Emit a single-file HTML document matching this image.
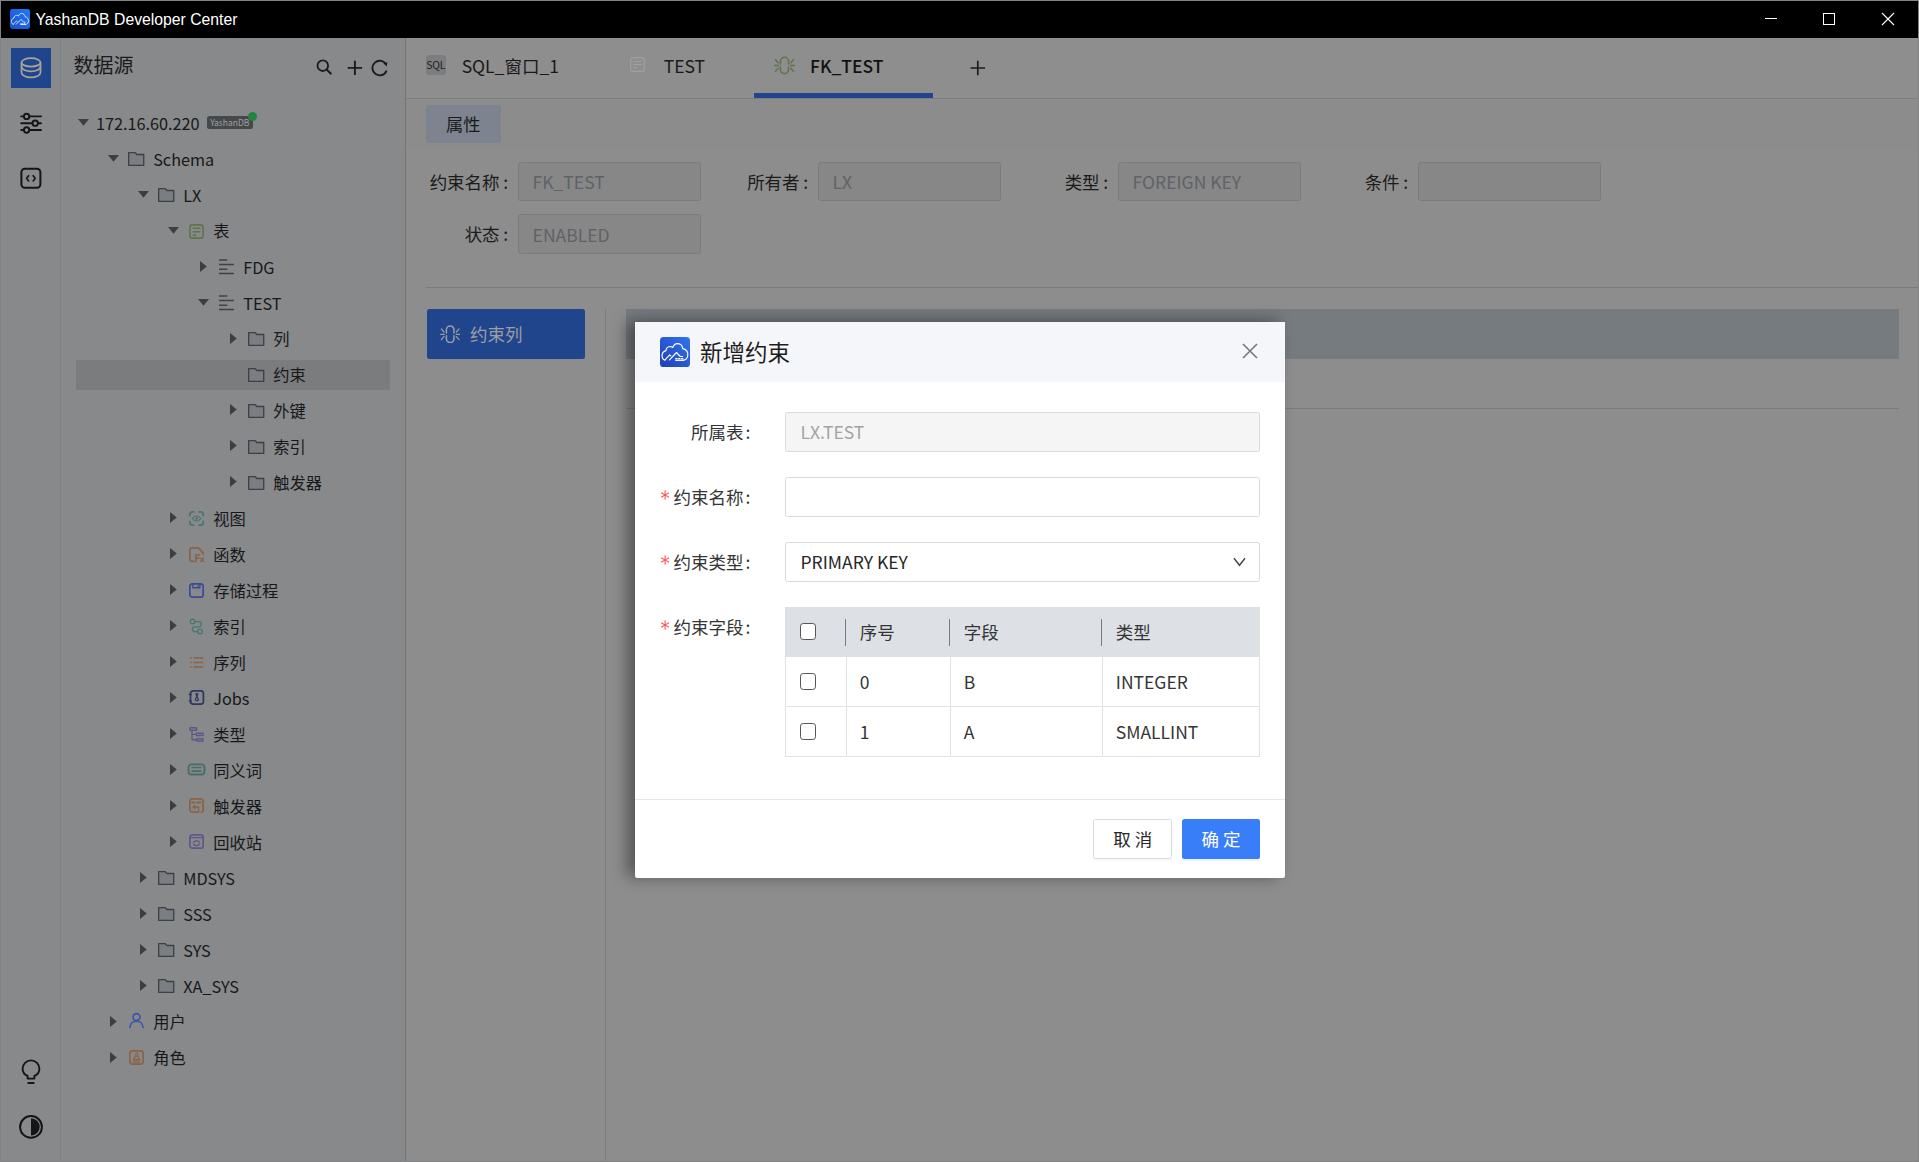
<!DOCTYPE html>
<html lang="zh-CN">
<head>
<meta charset="utf-8">
<title>YashanDB Developer Center</title>
<style>
*{box-sizing:border-box;margin:0;padding:0}
html,body{width:1919px;height:1162px;overflow:hidden;background:#828384}
body{font-family:"Noto Sans CJK SC","Liberation Sans",sans-serif;color:#17181a;position:relative;font-size:16.25px}
.abs{position:absolute}
svg{display:block}
#titlebar{position:absolute;left:1px;top:1px;width:1917px;height:37px;background:#000;color:#fff;font-family:"Liberation Sans","Noto Sans CJK SC",sans-serif;font-size:15.75px}
#titlebar svg{position:absolute}
#titlebar .tt{position:absolute;left:34.5px;top:0;line-height:38px;white-space:nowrap}
#iconbar{position:absolute;left:1px;top:38px;width:59px;height:1123px;background:#88898b}
#iconbar-b{position:absolute;left:60px;top:38px;width:1px;height:1123px;background:#7e8285}
#side{position:absolute;left:61px;top:38px;width:344px;height:1123px;background:#88898b}
#side-b{position:absolute;left:405px;top:38px;width:1px;height:1123px;background:#737476}
#main{position:absolute;left:406px;top:38px;width:1512px;height:1123px;background:#8d8d8d;overflow:hidden}
.row{position:absolute;left:0;width:344px;height:30px;line-height:30px;white-space:nowrap;font-size:16.25px;color:#17181a}
.row .tx{position:absolute;top:1px;line-height:30px}
.row svg{position:absolute}
.lbl{position:absolute;white-space:nowrap;text-align:right;font-size:17.5px;line-height:40.5px;color:#1b1b1c;width:120px}
.lbl b{font-weight:normal;margin-left:3.5px}
.inp{position:absolute;height:38.5px;width:183px;background:#878787;border:1px solid #787c81;border-radius:2.5px;font-size:17.5px;line-height:38.8px;padding-left:13.6px;color:#5f6266;white-space:nowrap}
.tab{position:absolute;top:0;height:60px;line-height:55px;font-size:17.5px;color:#19191a;white-space:nowrap}
/* dialog */
#dlg{position:absolute;left:635px;top:322px;width:650px;height:556px;background:#fff;border-radius:0 0 2.5px 2.5px;box-shadow:-8px -1px 16px 0 rgba(0,0,0,.4);color:#222;font-size:17.5px}
#dlg .hd{position:absolute;left:0;top:0;width:650px;height:60px;background:#f5f6fa}
#dlg .hd .t{position:absolute;left:65px;top:0;line-height:59px;font-size:22.5px;color:#1d1d1d;white-space:nowrap}
#dlg svg{position:absolute}
#dlg .fl{position:absolute;left:0;width:115.4px;text-align:right;line-height:40px;font-size:17.5px;color:#353535;white-space:nowrap}
#dlg .fl i{font-style:normal;color:#ff4d4f;font-family:"WenQuanYi Zen Hei","DejaVu Sans",sans-serif;font-size:21px;line-height:20px;margin-right:2.3px;position:relative;top:1.2px}
#dlg .fl b{font-weight:normal;margin-left:2px}
#dlg .fi{position:absolute;left:150px;width:475px;height:40px;border:1px solid #d6dbe3;border-radius:2.5px;background:#fff;line-height:38px;padding-left:14.5px;font-size:17.5px;color:#262626;white-space:nowrap}
#dlg .fi.dis{background:#f5f5f5;color:#a3a3a3}
#dlg table{position:absolute;left:150px;top:285px;width:475px;border-collapse:separate;border-spacing:0;table-layout:fixed;font-size:17.5px;color:#353535}
#dlg th{height:49.7px;background:#dde1e6;font-weight:normal;text-align:left;padding:0 0 0 12.8px;position:relative}
#dlg td{height:50px;border-right:1px solid #dfe3e9;border-bottom:1px solid #dfe3e9;padding:0 0 0 12.8px}
#dlg td:first-child{border-left:1px solid #dfe3e9;padding-left:13px}
#dlg th:first-child{padding-left:14px}
#dlg th .dv{position:absolute;left:-2px;top:11.5px;width:1px;height:27px;background:#777b80}
#dlg .cb{display:block;width:16.8px;height:16.8px;border:1.3px solid #555;border-radius:3.2px;background:#fff;margin-left:0.5px}
#dlg .ft{position:absolute;left:0;top:477px;width:650px;height:1px;background:#e4e8ee}
#dlg .btn{position:absolute;top:497px;height:39.8px;border-radius:2.5px;font-size:17.5px;line-height:37.5px;text-align:center;white-space:nowrap}
</style>
</head>
<body>
<div id="titlebar"><svg style="left:9.00px;top:8.00px" width="20" height="20" viewBox="0 0 30 30" ><defs><linearGradient id="lg1" x1="1" y1="0" x2="0" y2="1"><stop offset="0" stop-color="#1f7af8"/><stop offset="1" stop-color="#1a50cc"/></linearGradient></defs><rect x="0" y="0" width="30" height="30" rx="3.600" fill="url(#lg1)"/><g fill="none" stroke="#fff" stroke-linecap="round" stroke-linejoin="round"><path d="M4.800 23C3 22.500 2.100 20.500 2.100 18.400C2.100 16 3.800 14.300 6 13.600C5.800 11.500 7.600 9.600 10 9.500C11 9.500 12 9.900 12.700 10.500C13.600 8.200 15.200 6.600 17.200 6.600C20 6.600 22.400 8.600 22.700 11.600C25.600 12.200 27.800 14.600 27.800 17.500C27.800 20.500 26 22.600 23.800 23.100" stroke-width="1.150"/><path d="M4.800 23.100L9.700 17.900L10.800 18.900M9.500 22.800L16.500 15.500L20.200 19.500H22.700" stroke-width="1.150"/><path d="M15.300 21.600H17.500M18.200 21.600H20.100M20.700 21.600H23.200" stroke-width="1.100" stroke-linecap="butt"/><path d="M15.300 23.300H24" stroke-width="1.300" stroke-linecap="butt"/></g></svg><span class="tt">YashanDB Developer Center</span><svg style="left:1760px;top:8px" width="20" height="20" viewBox="1761 9 20 20"><path d="M1765 18.500H1777" stroke="#fff" stroke-width="1"/></svg><svg style="left:1818px;top:8px" width="20" height="20" viewBox="1819 9 20 20"><rect x="1823.500" y="13.500" width="11" height="11" fill="none" stroke="#fff" stroke-width="1"/></svg><svg style="left:1877px;top:8px" width="20" height="20" viewBox="1878 9 20 20"><path d="M1882 13L1894 25M1894 13L1882 25" stroke="#fff" stroke-width="1.100"/></svg></div>
<div id="iconbar"><div class="abs" style="left:10px;top:10px;width:40px;height:40px;background:#1f458c"></div><svg class="abs" style="left:0;top:0" width="59" height="160" viewBox="1 38 59 160"><g fill="none" stroke="#aaa498" stroke-width="1.700" stroke-linecap="round"><ellipse cx="31" cy="62.400" rx="9.500" ry="4.200"/><path d="M21.500 62.400V66.800A9.500 4.600 0 0 0 40.500 66.800V62.400"/><path d="M21.500 66.800V72.600A9.500 4.800 0 0 0 40.500 72.600V66.800"/></g><g fill="none" stroke="#141517" stroke-width="1.900" stroke-linecap="round"><path d="M21.200 116.400H23.600M29.600 116.400H41M21.200 123.200H32.200M38.200 123.200H41M21.200 130H23.600M29.600 130H41"/><circle cx="26.600" cy="116.400" r="2.700"/><circle cx="35.200" cy="123.200" r="2.700"/><circle cx="26.600" cy="130" r="2.700"/></g><g fill="none" stroke="#141517" stroke-width="2" stroke-linecap="round" stroke-linejoin="round"><rect x="21.400" y="168.800" width="19" height="19" rx="3.500"/><path d="M28.600 175.700L26.600 178.300L28.600 180.900M33.200 175.700L35.200 178.300L33.200 180.900" stroke-width="1.600"/></g></svg><svg class="abs" style="left:0;top:1010px" width="59" height="113" viewBox="1 1048 59 113"><g fill="none" stroke="#141517" stroke-width="1.900" stroke-linecap="round" stroke-linejoin="round"><path d="M27.600 1078.600H34.400V1076C37.500 1074.700 39.400 1072 39.400 1068.800A8.400 8.400 0 0 0 22.600 1068.800C22.600 1072 24.500 1074.700 27.600 1076Z"/><path d="M28.300 1083H33.700"/><circle cx="31" cy="1126.900" r="10.900" stroke-width="2"/></g><path d="M31 1118.200A8.700 8.700 0 0 1 31 1135.600Z" fill="#141517"/></svg></div><div id="iconbar-b"></div>
<div id="side">
<div class="abs" style="left:12.5px;top:12.4px;font-size:20px;line-height:30px;color:#1a1b1d">数据源</div>
<svg class="abs" style="left:239px;top:2px" width="100" height="60" viewBox="300 40 100 60"><g fill="none" stroke="#1b1c1e" stroke-width="1.900" stroke-linecap="butt"><circle cx="322.800" cy="65.700" r="5.300"/><path d="M326.600 69.500L331.400 74.200"/><path d="M347.700 67.900H362.100M354.900 60.700V75.100"/><path d="M386.200 64.600A7.300 7.300 0 1 0 386.600 70.600"/></g><path d="M383.300 63.300L387.300 62.300L386.800 66.600Z" fill="#1b1c1e"/></svg>
<div class="row" style="top:70.00px"><svg style="left:17.10px;top:10.9px" width="11" height="7" viewBox="0 0 11 7"><path d="M0 0H11L5.5 6.8Z" fill="#3b3e43"/></svg><span class="tx" style="left:34.90px;top:0.3px">172.16.60.220</span><span class="abs" style="left:146px;top:7.600px;width:45.500px;height:13.600px;background:#46484c;border-radius:2.500px;color:#9fa0a2;font-size:8.500px;line-height:13.400px;text-align:center">YashanDB</span><span class="abs" style="left:187px;top:3.600px;width:9px;height:9px;border-radius:50%;background:#23843f"></span></div>
<div class="row" style="top:105.95px"><svg style="left:47.10px;top:10.9px" width="11" height="7" viewBox="0 0 11 7"><path d="M0 0H11L5.5 6.8Z" fill="#3b3e43"/></svg><svg style="left:66.80px;top:8.40px;overflow:visible" width="16.4" height="14" viewBox="0 0 16.4 14"><path d="M0.650 0.650H7.200L8.900 2.500H15.750V13.350H0.650Z" fill="#7a7e82" stroke="#3c3f44" stroke-width="1.300" stroke-linejoin="round"/></svg><span class="tx" style="left:92.20px;top:0.3px">Schema</span></div>
<div class="row" style="top:141.90px"><svg style="left:77.10px;top:10.9px" width="11" height="7" viewBox="0 0 11 7"><path d="M0 0H11L5.5 6.8Z" fill="#3b3e43"/></svg><svg style="left:96.80px;top:8.40px;overflow:visible" width="16.4" height="14" viewBox="0 0 16.4 14"><path d="M0.650 0.650H7.200L8.900 2.500H15.750V13.350H0.650Z" fill="#7a7e82" stroke="#3c3f44" stroke-width="1.300" stroke-linejoin="round"/></svg><span class="tx" style="left:122.20px;top:0.3px">LX</span></div>
<div class="row" style="top:177.85px"><svg style="left:107.10px;top:10.9px" width="11" height="7" viewBox="0 0 11 7"><path d="M0 0H11L5.5 6.8Z" fill="#3b3e43"/></svg><svg style="left:127.50px;top:7.85px;overflow:visible" width="15" height="15" viewBox="0 0 15 15"><g stroke-linecap="round" stroke-linejoin="round" fill="none" stroke="#5f7448"><rect x="0.850" y="0.850" width="13.300" height="13.300" rx="2.600" stroke-width="1.600"/><path d="M4.200 4.150H10.800M4.200 7.650H10.800M4.200 11.150H6.700" stroke-width="1.500"/></g></svg><span class="tx" style="left:152.20px;top:-0.4px">表</span></div>
<div class="row" style="top:213.80px"><svg style="left:139.30px;top:8.9px" width="7" height="11" viewBox="0 0 7 11"><path d="M0 0V11L6.8 5.5Z" fill="#3b3e43"/></svg><svg style="left:157.50px;top:7.50px;overflow:visible" width="15" height="15" viewBox="0 0 15 15"><path d="M0 1H8.300M0 5.600H14.900M0 10.200H8.300M0 14.600H14.900" stroke="#3f4246" stroke-width="1.500" fill="none"/></svg><span class="tx" style="left:182.20px;top:0.3px">FDG</span></div>
<div class="row" style="top:249.75px"><svg style="left:137.10px;top:10.9px" width="11" height="7" viewBox="0 0 11 7"><path d="M0 0H11L5.5 6.8Z" fill="#3b3e43"/></svg><svg style="left:157.50px;top:7.50px;overflow:visible" width="15" height="15" viewBox="0 0 15 15"><path d="M0 1H8.300M0 5.600H14.900M0 10.200H8.300M0 14.600H14.900" stroke="#3f4246" stroke-width="1.500" fill="none"/></svg><span class="tx" style="left:182.20px;top:0.3px">TEST</span></div>
<div class="row" style="top:285.70px"><svg style="left:169.30px;top:8.9px" width="7" height="11" viewBox="0 0 7 11"><path d="M0 0V11L6.8 5.5Z" fill="#3b3e43"/></svg><svg style="left:186.80px;top:8.40px;overflow:visible" width="16.4" height="14" viewBox="0 0 16.4 14"><path d="M0.650 0.650H7.200L8.900 2.500H15.750V13.350H0.650Z" fill="#7a7e82" stroke="#3c3f44" stroke-width="1.300" stroke-linejoin="round"/></svg><span class="tx" style="left:212.20px;top:-0.4px">列</span></div>
<div class="abs" style="left:15px;top:322.15px;width:314px;height:29.7px;background:#7b7c7e"></div><div class="row" style="top:321.65px"><svg style="left:186.80px;top:8.40px;overflow:visible" width="16.4" height="14" viewBox="0 0 16.4 14"><path d="M0.650 0.650H7.200L8.900 2.500H15.750V13.350H0.650Z" fill="#7a7e82" stroke="#3c3f44" stroke-width="1.300" stroke-linejoin="round"/></svg><span class="tx" style="left:212.20px;top:-0.4px">约束</span></div>
<div class="row" style="top:357.60px"><svg style="left:169.30px;top:8.9px" width="7" height="11" viewBox="0 0 7 11"><path d="M0 0V11L6.8 5.5Z" fill="#3b3e43"/></svg><svg style="left:186.80px;top:8.40px;overflow:visible" width="16.4" height="14" viewBox="0 0 16.4 14"><path d="M0.650 0.650H7.200L8.900 2.500H15.750V13.350H0.650Z" fill="#7a7e82" stroke="#3c3f44" stroke-width="1.300" stroke-linejoin="round"/></svg><span class="tx" style="left:212.20px;top:-0.4px">外键</span></div>
<div class="row" style="top:393.55px"><svg style="left:169.30px;top:8.9px" width="7" height="11" viewBox="0 0 7 11"><path d="M0 0V11L6.8 5.5Z" fill="#3b3e43"/></svg><svg style="left:186.80px;top:8.40px;overflow:visible" width="16.4" height="14" viewBox="0 0 16.4 14"><path d="M0.650 0.650H7.200L8.900 2.500H15.750V13.350H0.650Z" fill="#7a7e82" stroke="#3c3f44" stroke-width="1.300" stroke-linejoin="round"/></svg><span class="tx" style="left:212.20px;top:-0.4px">索引</span></div>
<div class="row" style="top:429.50px"><svg style="left:169.30px;top:8.9px" width="7" height="11" viewBox="0 0 7 11"><path d="M0 0V11L6.8 5.5Z" fill="#3b3e43"/></svg><svg style="left:186.80px;top:8.40px;overflow:visible" width="16.4" height="14" viewBox="0 0 16.4 14"><path d="M0.650 0.650H7.200L8.900 2.500H15.750V13.350H0.650Z" fill="#7a7e82" stroke="#3c3f44" stroke-width="1.300" stroke-linejoin="round"/></svg><span class="tx" style="left:212.20px;top:-0.4px">触发器</span></div>
<div class="row" style="top:465.45px"><svg style="left:109.30px;top:8.9px" width="7" height="11" viewBox="0 0 7 11"><path d="M0 0V11L6.8 5.5Z" fill="#3b3e43"/></svg><svg style="left:127.50px;top:7.20px;overflow:visible" width="15" height="15" viewBox="0 0 15 15"><g stroke-linecap="round" stroke-linejoin="round" fill="none" stroke="#47746e" stroke-width="1.700"><path d="M0.850 4.600V3.300A2.450 2.450 0 0 1 3.300 0.850H4.800M10.200 0.850H11.700A2.450 2.450 0 0 1 14.150 3.300V4.600M14.150 10.400V11.700A2.450 2.450 0 0 1 11.700 14.150H10.200M4.800 14.150H3.300A2.450 2.450 0 0 1 0.850 11.700V10.400"/><path d="M3.300 7.500C4.500 5.700 5.900 5 7.600 5S10.700 5.700 11.900 7.500C10.700 9.300 9.300 10 7.600 10S4.500 9.300 3.300 7.500Z" stroke-width="1.100"/></g><circle cx="7.600" cy="7.500" r="1.350" fill="#47746e"/></svg><span class="tx" style="left:152.20px;top:-0.4px">视图</span></div>
<div class="row" style="top:501.40px"><svg style="left:109.30px;top:8.9px" width="7" height="11" viewBox="0 0 7 11"><path d="M0 0V11L6.8 5.5Z" fill="#3b3e43"/></svg><svg style="left:127.50px;top:7.20px;overflow:visible" width="15" height="15" viewBox="0 0 15 15"><g stroke-linecap="round" stroke-linejoin="round" fill="none" stroke="#8b6345" stroke-width="1.700"><path d="M4.700 14.400H3.100A2.250 2.250 0 0 1 0.850 12.150V3.100A2.250 2.250 0 0 1 3.100 0.850H9.200L14.150 5.900V7.100"/></g><path d="M6.950 15.200V8H11.100M6.950 11.200H10.400" stroke="#8b6345" stroke-width="1.700" fill="none"/><path d="M11.400 10.600L14.900 15.100M14.900 10.600L11.400 15.100" stroke="#8b6345" stroke-width="1.500" fill="none"/></svg><span class="tx" style="left:152.20px;top:-0.4px">函数</span></div>
<div class="row" style="top:537.35px"><svg style="left:109.30px;top:8.9px" width="7" height="11" viewBox="0 0 7 11"><path d="M0 0V11L6.8 5.5Z" fill="#3b3e43"/></svg><svg style="left:127.50px;top:7.20px;overflow:visible" width="15" height="15" viewBox="0 0 15 15"><g stroke-linecap="round" stroke-linejoin="round" fill="none" stroke="#3a4c92" stroke-width="1.700"><rect x="0.850" y="0.850" width="13.300" height="13.300" rx="2.500"/><path d="M3.900 1V4.800H10.900V1" stroke-width="1.400"/></g><circle cx="9" cy="2.900" r="0.800" fill="#3a4c92"/></svg><span class="tx" style="left:152.20px;top:-0.4px">存储过程</span></div>
<div class="row" style="top:573.30px"><svg style="left:109.30px;top:8.9px" width="7" height="11" viewBox="0 0 7 11"><path d="M0 0V11L6.8 5.5Z" fill="#3b3e43"/></svg><svg style="left:127.50px;top:7.25px;overflow:visible" width="15" height="15" viewBox="0 0 15 15"><g stroke-linecap="round" stroke-linejoin="round" fill="none" stroke="#4a7771" stroke-width="1.350"><circle cx="3.600" cy="2.500" r="2.300"/><circle cx="11" cy="12.450" r="2.300"/><path d="M6 2.600H9.600A2.600 2.600 0 0 1 9.600 7.800H5.800A2.400 2.400 0 0 0 5.800 12.600H8.600"/></g></svg><span class="tx" style="left:152.20px;top:-0.4px">索引</span></div>
<div class="row" style="top:609.25px"><svg style="left:109.30px;top:8.9px" width="7" height="11" viewBox="0 0 7 11"><path d="M0 0V11L6.8 5.5Z" fill="#3b3e43"/></svg><svg style="left:127.50px;top:7.50px;overflow:visible" width="15" height="15" viewBox="0 0 15 15"><path d="M4.500 3H14.200M4.500 7.500H14.200M4.500 12H14.200" stroke="#8b6345" stroke-width="1.300" fill="none"/><path d="M1 3H2.700M1 7.500H2.700M1 12H2.700" stroke="#8b6345" stroke-width="1.700" fill="none"/></svg><span class="tx" style="left:152.20px;top:-0.4px">序列</span></div>
<div class="row" style="top:645.20px"><svg style="left:109.30px;top:8.9px" width="7" height="11" viewBox="0 0 7 11"><path d="M0 0V11L6.8 5.5Z" fill="#3b3e43"/></svg><svg style="left:127.50px;top:7.30px;overflow:visible" width="15" height="15" viewBox="0 0 15 15"><g stroke-linecap="round" stroke-linejoin="round" fill="none" stroke="#303764"><rect x="1.500" y="0.850" width="12.900" height="13.300" rx="2.600" stroke-width="1.700"/><path d="M0.300 4.500H2.300M0.300 11H2.300" stroke-width="1.400"/><path d="M6.700 3.800H9.100M7.200 4.100L7.700 6.400L6.300 9.700A1.800 1.800 0 0 0 9.500 9.700L8.100 6.400L8.600 4.100" stroke-width="1.200"/></g></svg><span class="tx" style="left:152.20px;top:0.3px">Jobs</span></div>
<div class="row" style="top:681.15px"><svg style="left:109.30px;top:8.9px" width="7" height="11" viewBox="0 0 7 11"><path d="M0 0V11L6.8 5.5Z" fill="#3b3e43"/></svg><svg style="left:127.50px;top:7.40px;overflow:visible" width="15" height="15" viewBox="0 0 15 15"><g stroke-linecap="round" stroke-linejoin="round" fill="none" stroke="#605788" stroke-width="1.400"><rect x="0.700" y="0.800" width="7" height="2.500" rx="0.600"/><rect x="7.300" y="6.200" width="6.800" height="2.300" rx="0.600"/><rect x="7.300" y="11.700" width="6.800" height="2.300" rx="0.600"/><path d="M3 3.600V12.800H7M3 7.400H7"/></g></svg><span class="tx" style="left:152.20px;top:-0.4px">类型</span></div>
<div class="row" style="top:717.10px"><svg style="left:109.30px;top:8.9px" width="7" height="11" viewBox="0 0 7 11"><path d="M0 0V11L6.8 5.5Z" fill="#3b3e43"/></svg><svg style="left:127.50px;top:7.40px;overflow:visible" width="15" height="15" viewBox="0 0 15 15"><g stroke-linecap="round" stroke-linejoin="round" fill="none" stroke="#466f69" stroke-width="1.900"><rect x="-0.450" y="2.350" width="15.900" height="10.100" rx="3"/><path d="M3.100 5.500H11.900M3.100 9.200H11.900" stroke-width="1.700"/></g></svg><span class="tx" style="left:152.20px;top:-0.4px">同义词</span></div>
<div class="row" style="top:753.05px"><svg style="left:109.30px;top:8.9px" width="7" height="11" viewBox="0 0 7 11"><path d="M0 0V11L6.8 5.5Z" fill="#3b3e43"/></svg><svg style="left:127.50px;top:7.30px;overflow:visible" width="15" height="15" viewBox="0 0 15 15"><g stroke-linecap="round" stroke-linejoin="round" fill="none" stroke="#8b6345" stroke-width="1.700"><path d="M12.300 14.150A1.900 1.900 0 0 0 14.150 12.200V3.300A2.450 2.450 0 0 0 11.700 0.850H3.300A2.450 2.450 0 0 0 0.850 3.300V11.700A2.450 2.450 0 0 0 3.300 14.150H8.300"/><path d="M3.100 4.500H5.500M8.300 4.500H11.500" stroke-width="2.100"/><path d="M9.600 14.200V9H4.200M5.800 7.400L4 9L5.800 10.700" stroke-width="1.400"/></g></svg><span class="tx" style="left:152.20px;top:-0.4px">触发器</span></div>
<div class="row" style="top:789.00px"><svg style="left:109.30px;top:8.9px" width="7" height="11" viewBox="0 0 7 11"><path d="M0 0V11L6.8 5.5Z" fill="#3b3e43"/></svg><svg style="left:127.50px;top:7.30px;overflow:visible" width="15" height="15" viewBox="0 0 15 15"><g stroke-linecap="round" stroke-linejoin="round" fill="none" stroke="#605788" stroke-width="1.700"><rect x="0.850" y="0.850" width="13.300" height="13.300" rx="2.500"/><path d="M1.200 3.700H13.800" stroke-width="1.300"/><path d="M4.500 8.600A3.200 2.300 0 0 1 10.300 7.900M10.600 9.800A3.200 2.300 0 0 1 4.800 10.500" stroke-width="1.300"/></g><path d="M9.300 7.300L11.300 8.600L9.600 6.500ZM5.800 11L3.800 9.800L5.400 11.900Z" fill="#605788"/></svg><span class="tx" style="left:152.20px;top:-0.4px">回收站</span></div>
<div class="row" style="top:824.95px"><svg style="left:79.30px;top:8.9px" width="7" height="11" viewBox="0 0 7 11"><path d="M0 0V11L6.8 5.5Z" fill="#3b3e43"/></svg><svg style="left:96.80px;top:8.40px;overflow:visible" width="16.4" height="14" viewBox="0 0 16.4 14"><path d="M0.650 0.650H7.200L8.900 2.500H15.750V13.350H0.650Z" fill="#7a7e82" stroke="#3c3f44" stroke-width="1.300" stroke-linejoin="round"/></svg><span class="tx" style="left:122.20px;top:0.3px">MDSYS</span></div>
<div class="row" style="top:860.90px"><svg style="left:79.30px;top:8.9px" width="7" height="11" viewBox="0 0 7 11"><path d="M0 0V11L6.8 5.5Z" fill="#3b3e43"/></svg><svg style="left:96.80px;top:8.40px;overflow:visible" width="16.4" height="14" viewBox="0 0 16.4 14"><path d="M0.650 0.650H7.200L8.900 2.500H15.750V13.350H0.650Z" fill="#7a7e82" stroke="#3c3f44" stroke-width="1.300" stroke-linejoin="round"/></svg><span class="tx" style="left:122.20px;top:0.3px">SSS</span></div>
<div class="row" style="top:896.85px"><svg style="left:79.30px;top:8.9px" width="7" height="11" viewBox="0 0 7 11"><path d="M0 0V11L6.8 5.5Z" fill="#3b3e43"/></svg><svg style="left:96.80px;top:8.40px;overflow:visible" width="16.4" height="14" viewBox="0 0 16.4 14"><path d="M0.650 0.650H7.200L8.900 2.500H15.750V13.350H0.650Z" fill="#7a7e82" stroke="#3c3f44" stroke-width="1.300" stroke-linejoin="round"/></svg><span class="tx" style="left:122.20px;top:0.3px">SYS</span></div>
<div class="row" style="top:932.80px"><svg style="left:79.30px;top:8.9px" width="7" height="11" viewBox="0 0 7 11"><path d="M0 0V11L6.8 5.5Z" fill="#3b3e43"/></svg><svg style="left:96.80px;top:8.40px;overflow:visible" width="16.4" height="14" viewBox="0 0 16.4 14"><path d="M0.650 0.650H7.200L8.900 2.500H15.750V13.350H0.650Z" fill="#7a7e82" stroke="#3c3f44" stroke-width="1.300" stroke-linejoin="round"/></svg><span class="tx" style="left:122.20px;top:0.3px">XA_SYS</span></div>
<div class="row" style="top:968.75px"><svg style="left:49.30px;top:8.9px" width="7" height="11" viewBox="0 0 7 11"><path d="M0 0V11L6.8 5.5Z" fill="#3b3e43"/></svg><svg style="left:67.50px;top:6.60px;overflow:visible" width="15" height="15" viewBox="0 0 15 15"><g stroke-linecap="round" stroke-linejoin="round" fill="none" stroke="#3c55a8" stroke-width="1.700"><circle cx="7.500" cy="4" r="3.450"/><path d="M0.950 14.300C1.200 10.700 4 8.150 7.500 8.150S13.800 10.700 14.050 14.300"/></g></svg><span class="tx" style="left:92.20px;top:-0.4px">用户</span></div>
<div class="row" style="top:1004.70px"><svg style="left:49.30px;top:8.9px" width="7" height="11" viewBox="0 0 7 11"><path d="M0 0V11L6.8 5.5Z" fill="#3b3e43"/></svg><svg style="left:67.50px;top:7.35px;overflow:visible" width="15" height="15" viewBox="0 0 15 15"><g stroke-linecap="round" stroke-linejoin="round" fill="none" stroke="#8b6345"><rect x="0.850" y="0.850" width="13.300" height="13.300" rx="2.600" stroke-width="1.700"/><circle cx="7.500" cy="4.300" r="1.400" stroke-width="1"/><path d="M4.900 8.600C5.200 7 6.300 6.300 7.500 6.300S9.800 7 10.100 8.600" stroke-width="1.100"/><path d="M4.200 9.400H10.800M4.200 10.800H10.800M4.200 12.200H10.800" stroke-width="1.100"/></g></svg><span class="tx" style="left:92.20px;top:-0.4px">角色</span></div>
</div><div id="side-b"></div>
<div id="main">
<!-- tab bar -->
<div class="abs" style="left:0;top:0;width:1513px;height:60px;background:#8e8e8e"></div>
<div class="abs" style="left:0;top:60px;width:1513px;height:1px;background:#7c7d7e"></div>
<div class="abs" style="left:19.800px;top:17px;width:20px;height:19.700px;background:#7c7d7f;border-radius:3px;font-size:10.500px;line-height:19.700px;text-align:center;color:#1e1e1f;letter-spacing:-0.300px">SQL</div>
<div class="tab" style="left:55.700px">SQL_窗口_1</div>
<svg class="abs" style="left:224.300px;top:19px" width="15" height="15" viewBox="0 0 15 15"><g fill="none" stroke="#a0a0a0" stroke-width="1.200" stroke-linecap="round"><rect x="0.700" y="0.700" width="13.600" height="13.600" rx="2.400"/><path d="M3.600 4.500H10.800M3.600 7.500H11.200M3.600 10.500H7.200"/></g></svg>
<div class="tab" style="left:257.700px">TEST</div>
<svg class="abs" style="left:367.500px;top:17.500px" width="21" height="19" viewBox="0 0 21 19"><g fill="none" stroke="#5f7448" stroke-width="1.550" stroke-linecap="round"><path d="M6.400 8.100V5.400A4.100 4.100 0 0 1 14.600 5.400V8.100M6.400 10.900V13.600A4.100 4.100 0 0 0 14.600 13.600V10.900"/><path d="M0.700 9.500H4.600M1.600 3.600L4 6.800M1.600 15.400L4 12.200M20.300 9.500H16.400M19.400 3.600L17 6.800M19.400 15.400L17 12.200" stroke-width="1.500"/></g></svg>
<div class="tab" style="left:404px;font-weight:500;color:#111">FK_TEST</div>
<div class="abs" style="left:348px;top:55px;width:179px;height:5px;background:#20458c"></div>
<svg class="abs" style="left:562px;top:20px" width="20" height="20" viewBox="0 0 20 20"><path d="M2.600 10H17M9.800 2.800V17.200" stroke="#1c1c1d" stroke-width="1.700" fill="none"/></svg>
<!-- sub tab -->
<div class="abs" style="left:0;top:61px;width:1513px;height:49.500px;background:#8c8c8c"></div>
<div class="abs" style="left:19.800px;top:67px;width:75px;height:37.700px;background:#7d848f;border-radius:3px;font-size:17.200px;line-height:37px;text-align:center;color:#1a1a1b">属性</div>
<!-- form -->
<div class="lbl" style="left:-18px;top:124px">约束名称<b>:</b></div>
<div class="inp" style="left:112px;top:124px">FK_TEST</div>
<div class="lbl" style="left:282px;top:124px">所有者<b>:</b></div>
<div class="inp" style="left:412px;top:124px">LX</div>
<div class="lbl" style="left:582px;top:124px">类型<b>:</b></div>
<div class="inp" style="left:712px;top:124px">FOREIGN KEY</div>
<div class="lbl" style="left:882px;top:124px">条件<b>:</b></div>
<div class="inp" style="left:1012px;top:124px"></div>
<div class="lbl" style="left:-18px;top:176.200px">状态<b>:</b></div>
<div class="inp" style="left:112px;top:176px;height:39.500px;line-height:39.800px">ENABLED</div>
<div class="abs" style="left:20px;top:248.500px;width:1493px;height:1px;background:#7b7b7b"></div>
<!-- left button -->
<div class="abs" style="left:21px;top:271px;width:158px;height:49.700px;background:#20458c;border-radius:2.500px"></div>
<svg class="abs" style="left:33.800px;top:286.700px" width="20.400" height="18.600" viewBox="0 0 20.400 18.600"><g fill="none" stroke="#9c9ea3" stroke-width="1.500" stroke-linecap="round"><path d="M6.400 7.900V4.800A3.800 3.800 0 0 1 14 4.800V7.900M6.400 10.700V13.800A3.800 3.800 0 0 0 14 13.800V10.700"/><path d="M0.700 9.300H4.300M1.400 3.900L4 7M1.400 14.700L4 11.600M19.700 9.300H16.100M19 3.900L16.400 7M19 14.700L16.400 11.600" stroke-width="1.250"/></g></svg>
<div class="abs" style="left:64px;top:271px;line-height:49px;font-size:17.500px;color:#9c9ea3;white-space:nowrap">约束列</div>
<div class="abs" style="left:199px;top:271px;width:1px;height:860px;background:#7c7c7c"></div>
<!-- right panel -->
<div class="abs" style="left:220px;top:271px;width:1273px;height:49.500px;background:#767b7f"></div>
<div class="abs" style="left:220px;top:369.500px;width:1273px;height:1px;background:#7b7b7b"></div>
</div>
<div id="dlg">
<div class="hd"><svg style="left:25.00px;top:14.80px" width="30" height="30" viewBox="0 0 30 30" ><defs><linearGradient id="lg2" x1="1" y1="0" x2="0" y2="1"><stop offset="0" stop-color="#2f76f0"/><stop offset="1" stop-color="#223db4"/></linearGradient></defs><rect x="0" y="0" width="30" height="30" rx="3.600" fill="url(#lg2)"/><g fill="none" stroke="#fff" stroke-linecap="round" stroke-linejoin="round"><path d="M4.800 23C3 22.500 2.100 20.500 2.100 18.400C2.100 16 3.800 14.300 6 13.600C5.800 11.500 7.600 9.600 10 9.500C11 9.500 12 9.900 12.700 10.500C13.600 8.200 15.200 6.600 17.200 6.600C20 6.600 22.400 8.600 22.700 11.600C25.600 12.200 27.800 14.600 27.800 17.500C27.800 20.500 26 22.600 23.800 23.100" stroke-width="1.150"/><path d="M4.800 23.100L9.700 17.900L10.800 18.900M9.500 22.800L16.500 15.500L20.200 19.500H22.700" stroke-width="1.150"/><path d="M15.300 21.600H17.500M18.200 21.600H20.100M20.700 21.600H23.200" stroke-width="1.100" stroke-linecap="butt"/><path d="M15.300 23.300H24" stroke-width="1.300" stroke-linecap="butt"/></g></svg><span class="t">新增约束</span>
<svg style="left:606px;top:20px" width="18" height="18" viewBox="0 0 18 18"><path d="M2 2L16 16M16 2L2 16" stroke="#777" stroke-width="1.600" fill="none"/></svg>
</div>
<div class="fl" style="top:90px">所属表<b>:</b></div>
<div class="fi dis" style="top:90px">LX.TEST</div>
<div class="fl" style="top:155px"><i>*</i>约束名称<b>:</b></div>
<div class="fi" style="top:155px"></div>
<div class="fl" style="top:220px"><i>*</i>约束类型<b>:</b></div>
<div class="fi" style="top:220px">PRIMARY KEY</div>
<svg style="left:597.500px;top:233.500px" width="13" height="12" viewBox="0 0 13 12"><path d="M1 2.200L6.500 9.300L12 2.200" stroke="#444" stroke-width="1.400" fill="none"/></svg>
<div class="fl" style="top:285px"><i>*</i>约束字段<b>:</b></div>
<table>
<colgroup><col style="width:62px"><col style="width:104px"><col style="width:152px"><col style="width:157px"></colgroup>
<tr><th><span class="cb"></span></th><th><span class="dv"></span>序号</th><th><span class="dv"></span>字段</th><th><span class="dv"></span>类型</th></tr>
<tr><td><span class="cb"></span></td><td>0</td><td>B</td><td>INTEGER</td></tr>
<tr><td><span class="cb"></span></td><td>1</td><td>A</td><td>SMALLINT</td></tr>
</table>
<div class="ft"></div>
<div class="btn" style="left:458.400px;width:78.600px;border:1px solid #d6dbe3;background:#fff;color:#262626;box-shadow:0 2px 0 rgba(0,0,0,.02)">取 消</div>
<div class="btn" style="left:547px;width:78px;background:#387ef8;color:#fff;line-height:39.500px;box-shadow:0 2px 0 rgba(40,120,250,.08)">确 定</div>
</div>
</body>
</html>
